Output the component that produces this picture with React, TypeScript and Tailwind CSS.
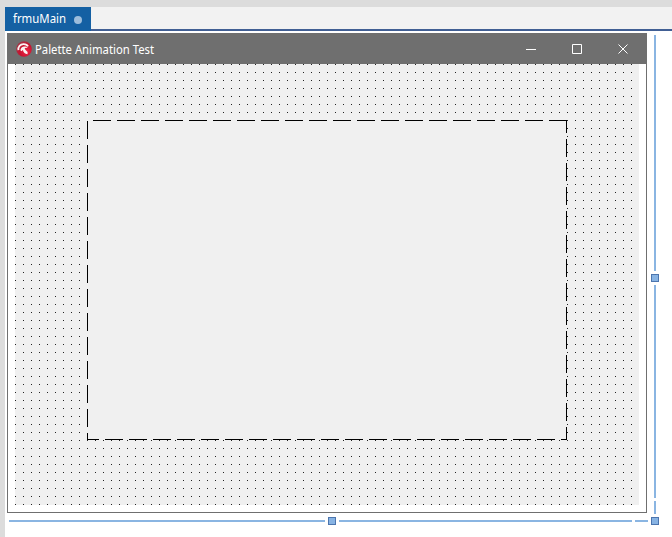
const controls = [
  { name: "minimize", path: "M0 5.5H10" },
  { name: "maximize", path: "M0.5 0.5H9.5V9.5H0.5Z" },
  { name: "close", path: "M0.5 0.5L9.5 9.5M9.5 0.5L0.5 9.5" },
];

function AppIcon() {
  return (
    <svg width="16" height="16" viewBox="0 0 16 16" className="ml-2 shrink-0">
      <defs>
        <radialGradient id="ball" cx="0.65" cy="0.65" r="0.7">
          <stop offset="0" stopColor="#ee2747" />
          <stop offset="0.6" stopColor="#c8122f" />
          <stop offset="1" stopColor="#a03545" />
        </radialGradient>
      </defs>
      <circle cx="8" cy="8" r="7.8" fill="url(#ball)" />
      <path d="M2.4 9.2C1.9 5.5 4.3 3.2 7.4 3.1C9.6 3 11.2 3.9 12 5.4" fill="none" stroke="#fbf3f3" strokeWidth="1.8" />
      <path
        d="M4.4 9.2C4.6 6.8 6.2 5.4 8.4 5.4C9.9 5.4 11 5.9 11.8 6.8L8.7 7.1L9.3 8.8L11.6 11L11.5 13.2C9 12.9 7.4 11.4 6.9 8.9L5.4 10.2Z"
        fill="#fbf3f3"
      />
    </svg>
  );
}

function TabStrip() {
  return (
    <div className="flex h-6 bg-[linear-gradient(#f2f2f2_22px,#415f94_22px)]">
      <div className="flex w-[86px] items-center bg-[#1460a3] pl-2 text-white">
        <svg width="54" height="20" className="block shrink-0 overflow-visible text-xs">
          <text x="0" y="14" textLength="53" lengthAdjust="spacingAndGlyphs" fill="currentColor">
            frmuMain
          </text>
        </svg>
        <span className="mt-px ml-[7px] size-2 rounded-full bg-[#9dbddb]" />
      </div>
    </div>
  );
}

function TitleBar() {
  return (
    <div className="flex h-[31px] shrink-0 items-center bg-[#6f6f6f] pr-px pl-px text-white">
      <AppIcon />
      <svg width="122" height="20" className="ml-[3px] block overflow-visible text-xs">
        <text x="0" y="14.5" textLength="119" lengthAdjust="spacingAndGlyphs" fill="currentColor">
          Palette Animation Test
        </text>
      </svg>
      <div className="ml-auto flex">
        {controls.map((c) => (
          <button key={c.name} aria-label={c.name} className="flex h-[31px] w-[46px] items-center justify-center">
            <svg width="10" height="10" viewBox="0 0 10 10" className="overflow-visible">
              <path d={c.path} fill="none" stroke="#fff" strokeWidth="1" />
            </svg>
          </button>
        ))}
      </div>
    </div>
  );
}

// 480x320 image placeholder, each side has its own dash phase
function ImageFrame() {
  return (
    <svg width="480" height="320" className="block bg-[#f0f0f0]" fill="none" stroke="#000" shapeRendering="crispEdges">
      <path d="M6 0.5H480" strokeDasharray="18 6" />
      <path d="M0.5 1V320" strokeDasharray="18 6" />
      <path d="M479.5 0V320" strokeDasharray="18 6" strokeDashoffset="5" />
      <path d="M0 319.5H480" strokeDasharray="18 6" strokeDashoffset="6" />
    </svg>
  );
}

function FormWindow() {
  return (
    <div className="flex h-[480px] w-[640px] flex-col bg-[#6f6f6f]">
      <TitleBar />
      <div className="mx-px mb-px flex-1 bg-white px-[7px]">
        <div className="h-[441px] w-[624px] bg-[#f0f0f0] bg-[conic-gradient(from_270deg_at_1px_1px,#222_90deg,transparent_90deg)] bg-size-[8px_8px] pt-14 pl-[72px]">
          <ImageFrame />
        </div>
      </div>
    </div>
  );
}

function Handle() {
  return <span className="size-2 shrink-0 border border-[#4c75ae] bg-[#87b3e3]" />;
}

function RightRuler() {
  return (
    <div className="ml-1 flex w-2 flex-col items-center pt-0.5">
      <span className="h-[236px] w-0.5 bg-[#8ab5e2]" />
      <span className="h-[3px]" />
      <Handle />
      <span className="mt-[3px] h-[213px] w-0.5 bg-[#8ab5e2]" />
      <span className="mt-[3px] h-[13px] w-0.5 bg-[#8ab5e2]" />
    </div>
  );
}

function BottomRuler() {
  return (
    <div className="flex h-2 items-center">
      <span className="h-0.5 w-[316px] bg-[#8ab5e2]" />
      <span className="w-[3px]" />
      <Handle />
      <span className="ml-[3px] h-0.5 w-[293px] bg-[#8ab5e2]" />
      <span className="ml-[3px] h-0.5 w-[13px] bg-[#8ab5e2]" />
      <span className="w-[3px]" />
      <Handle />
    </div>
  );
}

export default function App() {
  return (
    <div className="h-[537px] w-[672px] overflow-hidden bg-[#dcdcdc] pt-[7px] pl-[5px] font-['Noto_Sans','Open_Sans',sans-serif]">
      <div className="h-[530px] bg-white">
        <TabStrip />
        <div className="flex h-[481px] items-start pt-0.5 pl-0.5">
          <FormWindow />
          <RightRuler />
        </div>
        <div className="pt-[5px] pl-1">
          <BottomRuler />
        </div>
      </div>
    </div>
  );
}
